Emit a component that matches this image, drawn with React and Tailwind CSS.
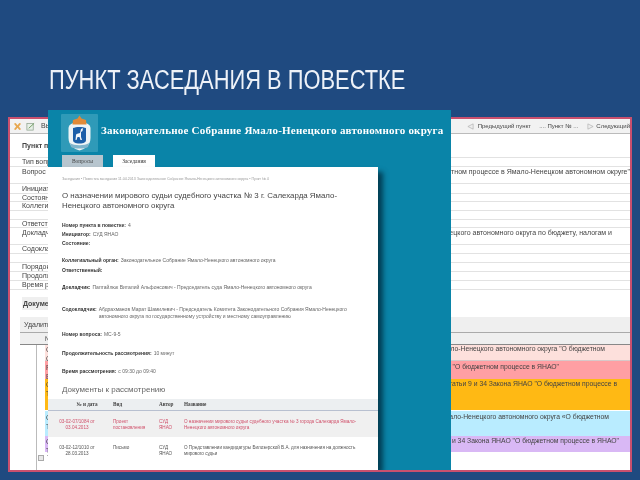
const sans = { fontFamily: '"Liberation Sans", Arial, sans-serif' }

const formRows = [
  { h: 'h-[24px]', label: 'Пункт повестки', bold: true, align: 'items-center pt-[1px]' },
  { h: 'h-[9px]', label: 'Тип вопроса', align: 'items-center' },
  { h: 'h-[17px]', label: 'Вопрос', value: 'О бюджетном процессе в Ямало-Ненецком автономном округе"', pr: 'pr-0', align: 'items-start pt-[1px]' },
  { h: 'h-[10px]', label: 'Инициатор', align: 'items-center' },
  { h: 'h-[8px]', label: 'Состояние', align: 'items-center' },
  { h: 'h-[9px]', label: 'Коллегия', align: 'items-center' },
  { h: 'h-[9px]', label: '', align: 'items-center' },
  { h: 'h-[8px]', label: 'Ответственный', align: 'items-center' },
  { h: 'h-[17px]', label: 'Докладчик', value: 'Ненецкого автономного округа по бюджету, налогам и', pr: 'pr-[18px]', align: 'items-start pt-[1px]' },
  { h: 'h-[9px]', label: 'Содокладчик', align: 'items-center' },
  { h: 'h-[9px]', label: '', align: 'items-center' },
  { h: 'h-[9px]', label: 'Порядок', align: 'items-center' },
  { h: 'h-[9px]', label: 'Продолжительность', align: 'items-center' },
  { h: 'h-[9px]', label: 'Время рассмотрения', align: 'items-center' },
]

const docRows = [
  { h: 'h-[16px]', bg: 'bg-[#fde0dc]', left: ['С', 'С'], text: 'Ямало-Ненецкого автономного округа "О бюджетном', pad: 'pr-[25px]', border: 'border-b border-[#d8c8c8]' },
  { h: 'h-[18px]', bg: 'bg-[#ff9fa3]', left: ['Р', 'Б'], text: 'Закона ЯНАО "О бюджетном процессе в ЯНАО"', pad: 'pr-[71px] pt-[2px]', border: '' },
  { h: 'h-[32px]', bg: 'bg-[#ffb914]', left: ['С', 'Т'], text: 'статьи 9 и 34 Закона ЯНАО "О бюджетном процессе в', pad: 'pr-[13px] pt-[1px]', border: 'border-b border-white' },
  { h: 'h-[25px]', bg: 'bg-[#b9ecff]', left: ['С', 'Т'], text: 'Ямало-Ненецкого автономного округа «О бюджетном', pad: 'pr-[21px] pt-[2px]', border: '' },
  { h: 'h-[16px]', bg: 'bg-[#d9b8f5]', left: ['С', 'Т'], text: 'и 34 Закона ЯНАО "О бюджетном процессе в ЯНАО"', pad: 'pr-[11px] pt-[1px]', border: '' },
]

const fields = [
  { h: 'h-[9px]', name: 'Номер пункта в повестке:', value: '4' },
  { h: 'h-[9px]', name: 'Инициатор:', value: 'СУД ЯНАО' },
  { h: 'h-[17px]', name: 'Состояние:', value: '' },
  { h: 'h-[10px]', name: 'Коллегиальный орган:', value: 'Законодательное Собрание Ямало-Ненецкого автономного округа' },
  { h: 'h-[17px]', name: 'Ответственный:', value: '' },
  { h: 'h-[22px]', name: 'Докладчик:', value: 'Паптайлюк Виталий Альфонсович - Председатель суда Ямало-Ненецкого автономного округа' },
  {
    h: 'h-[25px]',
    name: 'Содокладчик:',
    value: 'Абдрахманов Марат Шамилевич - Председатель Комитета Законодательного Собрания Ямало-Ненецкого автономного округа по государственному устройству и местному самоуправлению',
  },
  { h: 'h-[19px]', name: 'Номер вопроса:', value: 'МС-9-5' },
  { h: 'h-[18px]', name: 'Продолжительность рассмотрения:', value: '10 минут' },
  { h: 'h-[12px]', name: 'Время рассмотрения:', value: 'с 09:30 до 09:40' },
]

const docs = [
  {
    bg: 'bg-[#f0f0f0]',
    h: 'h-[26px]',
    color: 'text-[#d0506a]',
    num: '03-02-07/1084 от 03.04.2013',
    kind: 'Проект постановления',
    author: 'СУД ЯНАО',
    title: 'О назначении мирового судьи судебного участка № 3 города Салехарда Ямало-Ненецкого автономного округа',
  },
  {
    bg: 'bg-white',
    h: 'h-[30px]',
    color: 'text-[#555]',
    num: '03-02-12/1010 от 28.03.2013',
    kind: 'Письмо',
    author: 'СУД ЯНАО',
    title: 'О Представлении кандидатуры Билозерской В.А. для назначения на должность мирового судьи',
  },
]

function Logo() {
  return (
    <svg viewBox="0 0 37 38" className="w-[37px] h-[38px] shrink-0">
      <rect width="37" height="38" rx="1" fill="#2f9ab8" />
      <path d="M18.5 7.5 C24 8 29 10 29.5 14 L29.5 24 C29.5 31 24 35 18.5 36.5 C13 35 7.5 31 7.5 24 L7.5 14 C8 10 13 8 18.5 7.5 Z" fill="#eef4f6" />
      <path d="M18.5 1.5 L20.5 4.5 L25 6 L25.5 10.5 L11.5 10.5 L12 6 L16.5 4.5 Z" fill="#e08a38" />
      <path d="M12 14 C15 12.5 22 12.5 25 14 L25 26 C25 28 23 29.5 18.5 29.5 C14 29.5 12 28 12 26 Z" fill="#1c5fa8" />
      <path d="M20 15 L22 14 L21.5 17 L20 18 L20 23 L21 26 L19.5 26 L18.5 23 L16.5 23 L15.5 26 L14.5 26 L15 21 L15.5 20 L19 19 Z" fill="#f4f8fa" />
      <path d="M9 29 C13 32 24 32 28 29 L27 33 C24 35 13 35 10 33 Z" fill="#7fb4cc" />
    </svg>
  )
}

function BackWindow() {
  return (
    <div className="ml-2 w-[624px] h-[355px] mt-[22px] bg-white border-2 border-[#c9506e] flex flex-col text-[#444] text-[7px] leading-[8px] blur-[0.35px]">
      {/* toolbar */}
      <div className="h-[15px] shrink-0 bg-[#f2f2f2] border-b border-[#bbb] flex items-center justify-between pl-[3px]">
        <div className="flex items-center gap-[4px]">
          <svg viewBox="0 0 10 10" className="w-[9px] h-[9px]">
            <path d="M1 2 L3 1 L5 3.5 L7 1 L9 2 L6.5 5 L9 8 L7 9 L5 6.5 L3 9 L1 8 L3.5 5 Z" fill="#e8a850" />
          </svg>
          <svg viewBox="0 0 10 10" className="w-[9px] h-[9px]">
            <rect x="1" y="1.5" width="7" height="7.5" fill="#e8f0e8" stroke="#8aa08a" strokeWidth="0.8" />
            <path d="M3 7 L9 1.5" stroke="#6a9a5a" strokeWidth="1" />
          </svg>
          <span className="ml-[2px]">Выход</span>
        </div>
        <div className="flex items-center text-[6px]">
          <svg viewBox="0 0 8 8" className="w-[7px] h-[7px] mr-[4px]">
            <path d="M7 1 L1 4 L7 7 Z" fill="#eee" stroke="#aaa" strokeWidth="0.7" />
          </svg>
          <span>Предыдущий пункт</span>
          <span className="ml-[8px] mr-[9px]">.... Пункт № ...</span>
          <svg viewBox="0 0 8 8" className="w-[7px] h-[7px] mr-[2px]">
            <path d="M1 1 L7 4 L1 7 Z" fill="#eee" stroke="#aaa" strokeWidth="0.7" />
          </svg>
          <span>Следующий</span>
        </div>
      </div>

      {/* form */}
      {formRows.map((row, i) => (
        <div
          key={i}
          className={`${row.h} ${row.align} shrink-0 flex justify-between border-b border-[#e2e2e2] pl-[12px] whitespace-nowrap`}
        >
          <span className={row.bold ? 'font-bold' : ''}>{row.label}</span>
          {row.value && <span className={row.pr}>{row.value}</span>}
        </div>
      ))}

      <div className="h-[7px] shrink-0" />
      <div className="h-[13px] shrink-0 ml-[12px] w-[70px] bg-[#efefef] flex items-center pl-[1px] font-bold">Документы</div>
      <div className="h-[7px] shrink-0" />

      {/* documents grid */}
      <div className="h-[16px] shrink-0 ml-[10px] bg-[#efefef] border-b border-[#aaa] flex items-center pl-[4px]">Удалить</div>
      <div className="h-[12px] shrink-0 ml-[10px] bg-[#efefef] border-b border-[#888] flex items-center pl-[25px]">№</div>
      <div className="flex-1 flex flex-col ml-[26px] border-l border-[#bbb] pl-[8px] text-[6.8px]">
        {docRows.map((row, i) => (
          <div key={i} className={`${row.h} ${row.bg} ${row.border} ${row.pad} shrink-0 flex justify-between items-start whitespace-nowrap`}>
            <span className="flex flex-col pl-[1px] leading-[9px]">
              <span>{row.left[0]}</span>
              <span>{row.left[1]}</span>
            </span>
            <span>{row.text}</span>
          </div>
        ))}
        <div className="flex-1 flex items-center -ml-[7px] gap-[3px] pb-[6px]">
          <span className="w-[6px] h-[6px] border border-[#aaa] bg-[#e8e8e8]" />
          <span>Т</span>
        </div>
      </div>
    </div>
  )
}

function FrontPanel() {
  return (
    <div className="absolute left-[48px] top-[110px] w-[403px] h-[360px] bg-[#0a84a8] flex flex-col overflow-hidden blur-[0.35px]">
      {/* header */}
      <div className="h-[45px] shrink-0 flex items-start pl-[13px] pt-[4px]">
        <Logo />
        <span
          className="ml-[3px] mt-[9px] text-white font-bold text-[11px] leading-[14px] tracking-[0.22px] whitespace-nowrap"
          style={{ fontFamily: '"Liberation Serif", "Times New Roman", serif' }}
        >
          Законодательное Собрание Ямало-Ненецкого автономного округа
        </span>
      </div>

      {/* tabs */}
      <div
        className="h-[12px] shrink-0 flex items-stretch pl-[14px] gap-[10px] text-[5.5px]"
        style={{ fontFamily: '"Liberation Serif", "Times New Roman", serif' }}
      >
        <div className="w-[41px] bg-[#b7c5ce] text-[#444] flex items-center justify-center">Вопросы</div>
        <div className="w-[42px] bg-white text-[#333] flex items-center justify-center">Заседания</div>
      </div>

      {/* card */}
      <div className="w-[330px] h-[303px] shrink-0 bg-white flex flex-col shadow-[6px_4px_5px_-1px_rgba(0,50,70,0.85)] text-[#666] text-[5px] leading-[7px]">
        <div className="h-[12px] mt-[6px] shrink-0 pl-[14px] text-[3.6px] text-[#999] whitespace-nowrap flex items-center">
          Заседания • Повестка заседания 11.04.2013 Законодательное Собрание Ямало-Ненецкого автономного округа • Пункт № 4
        </div>
        <div className="pl-[14px] mt-[6px] shrink-0 text-[7.9px] leading-[10px] text-[#444] w-[310px] h-[25px]">
          О назначении мирового судьи судебного участка № 3 г. Салехарда Ямало-Ненецкого автономного округа
        </div>
        <div className="mt-[6px] shrink-0 flex flex-col pl-[14px] pr-[22px]">
          {fields.map((f) => (
            <div key={f.name} className={`${f.h} flex gap-[2px]`}>
              <span className="font-bold text-[#333] whitespace-nowrap">{f.name}</span>
              <span className="leading-[7px]">{f.value}</span>
            </div>
          ))}
        </div>
        <div className="pl-[14px] mt-[5px] h-[14px] shrink-0 text-[8px] leading-[10px] text-[#666]">Документы к рассмотрению</div>
        <div className="h-[12px] shrink-0 bg-[#eceff1] border-b border-[#b8c0d0] flex items-center font-bold text-[#444] text-[5.2px]" style={{ fontFamily: '"Liberation Serif", serif' }}>
          <span className="w-[65px] text-center pl-[13px] shrink-0">№ и дата</span>
          <span className="w-[46px] shrink-0">Вид</span>
          <span className="w-[25px] shrink-0">Автор</span>
          <span>Название</span>
        </div>
        {docs.map((d) => (
          <div key={d.num} className={`${d.h} ${d.bg} ${d.color} shrink-0 flex items-start pt-[8px] text-[4.6px] leading-[5.5px]`}>
            <span className="w-[65px] text-center pl-[3px] pr-[10px] shrink-0">{d.num}</span>
            <span className="w-[46px] pr-[8px] shrink-0">{d.kind}</span>
            <span className="w-[25px] pr-[8px] shrink-0">{d.author}</span>
            <span className="w-[180px]">{d.title}</span>
          </div>
        ))}
      </div>
    </div>
  )
}

export default function App() {
  return (
    <div className="relative w-[640px] h-[480px] overflow-hidden bg-[#1f4a80] flex flex-col" style={sans}>
      <h1 className="mt-[66px] ml-[49px] h-[29px] text-[#eef2f8] text-[27px] leading-[29px] whitespace-nowrap origin-left scale-x-[0.81] blur-[0.3px]">
        ПУНКТ ЗАСЕДАНИЯ В ПОВЕСТКЕ
      </h1>
      <BackWindow />
      <FrontPanel />
    </div>
  )
}
